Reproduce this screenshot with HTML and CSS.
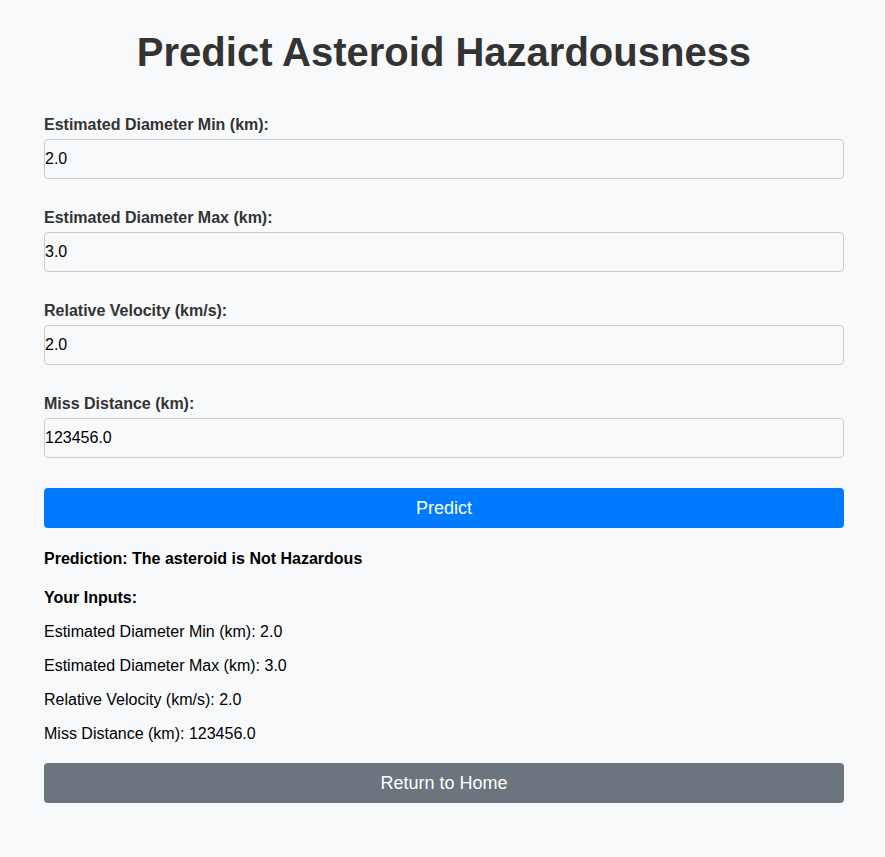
FILE: index.html
```html
<!DOCTYPE html>
<html lang="en">
<head>
<meta charset="utf-8">
<title>Predict Asteroid Hazardousness</title>
<link rel="stylesheet" href="styles.css">
</head>
<body>
<div class="container">
  <h1 class="title">Predict Asteroid Hazardousness</h1>
  <form class="form">
    <div class="field">
      <label class="label" for="dmin">Estimated Diameter Min (km):</label>
      <input class="input" id="dmin" type="text" value="2.0">
    </div>
    <div class="field">
      <label class="label" for="dmax">Estimated Diameter Max (km):</label>
      <input class="input" id="dmax" type="text" value="3.0">
    </div>
    <div class="field">
      <label class="label" for="vel">Relative Velocity (km/s):</label>
      <input class="input" id="vel" type="text" value="2.0">
    </div>
    <div class="field">
      <label class="label" for="miss">Miss Distance (km):</label>
      <input class="input" id="miss" type="text" value="123456.0">
    </div>
    <button class="btn btn-primary" type="button">Predict</button>
  </form>
  <div class="result">
    <p class="prediction">Prediction: The asteroid is Not Hazardous</p>
    <p class="inputs-head">Your Inputs:</p>
    <p class="line">Estimated Diameter Min (km): 2.0</p>
    <p class="line">Estimated Diameter Max (km): 3.0</p>
    <p class="line">Relative Velocity (km/s): 2.0</p>
    <p class="line">Miss Distance (km): 123456.0</p>
  </div>
  <button class="btn btn-secondary" type="button">Return to Home</button>
</div>
</body>
</html>
```

FILE: styles.css
```css
html, body {
  margin: 0;
  padding: 0;
  background: #f8f9fa;
}
body {
  font-family: "Liberation Sans", Arial, sans-serif;
  color: #000;
  padding-left: 3px;
}
.container {
  width: 800px;
  margin: 0 auto;
  padding-top: 29px;
  padding-bottom: 40px;
}
.title {
  margin: 0 0 41px;
  font-size: 40px;
  line-height: 46px;
  font-weight: bold;
  color: #333;
  text-align: center;
}
.form {
  display: flex;
  flex-direction: column;
}
.field {
  display: flex;
  flex-direction: column;
  margin-bottom: 30px;
}
.label {
  font-size: 16px;
  line-height: 18px;
  font-weight: bold;
  color: #333;
  margin-bottom: 5px;
}
.input {
  box-sizing: border-box;
  height: 40px;
  width: 100%;
  padding: 0;
  margin: 0;
  border: 1px solid #ccc;
  border-radius: 4px;
  background: transparent;
  font-family: "Liberation Sans", Arial, sans-serif;
  font-size: 16px;
  color: #000;
  outline: none;
}
.btn {
  display: block;
  box-sizing: border-box;
  width: 100%;
  height: 40px;
  border: none;
  border-radius: 4px;
  color: #fff;
  font-family: "Liberation Sans", Arial, sans-serif;
  font-size: 18px;
  cursor: pointer;
}
.btn-primary {
  background: #007bff;
}
.btn-secondary {
  background: #6c757d;
}
.result {
  padding-top: 22px;
  padding-bottom: 20px;
}
.result p {
  margin: 0;
  font-size: 16px;
  line-height: 18px;
}
.prediction {
  font-weight: bold;
}
.inputs-head {
  font-weight: bold;
  margin-top: 21px !important;
}
.line {
  margin-top: 16px !important;
}
```
